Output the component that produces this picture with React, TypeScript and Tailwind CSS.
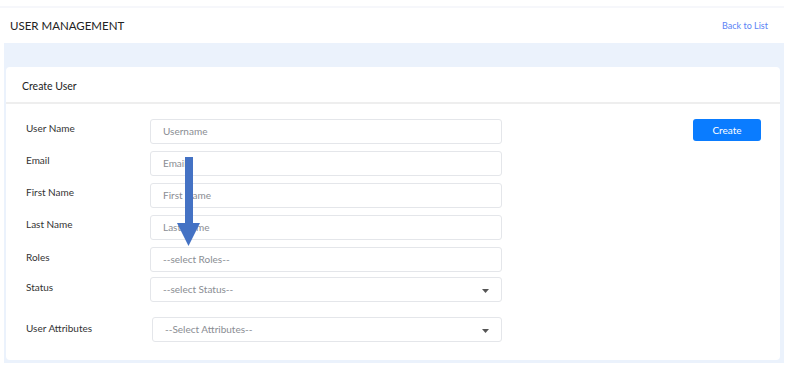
const fields = [
  { label: "User Name", placeholder: "Username" },
  { label: "Email", placeholder: "Email" },
  { label: "First Name", placeholder: "First Name" },
  { label: "Last Name", placeholder: "Last Name" },
];

function Caret() {
  return (
    <svg width="7" height="4" viewBox="0 0 7 4" className="absolute right-[12px] top-[11px]">
      <path d="M0 0h7L3.5 4z" fill="#555" />
    </svg>
  );
}

function TextBox({ placeholder, caret }: { placeholder: string; caret?: boolean }) {
  return (
    <div className="relative h-[25px] w-[352px] rounded-[3px] border border-[#e4e6ea] bg-white pl-[12px] flex items-center text-[10px] text-[#8a8d93]">
      {placeholder}
      {caret && <Caret />}
    </div>
  );
}

export default function App() {
  return (
    <div className="w-[803px] h-[383px] bg-white font-['Lato',sans-serif] text-[#333]">
      <div className="w-[784px]">
        <div className="h-[6px]" />
        <div className="h-[37px] border-t-2 border-[#f6f7fb] flex items-center justify-between pl-[10px] pr-[16px]">
          <span className="text-[11.5px] text-[#222]">USER MANAGEMENT</span>
          <span className="text-[9px] text-[#5b83f5]">Back to List</span>
        </div>
        <div className="ml-[4px] bg-[#ebf2fc] pt-[24px] pb-[3px] pl-[2px] pr-[4px]">
          <div className="h-[293px] rounded-[4px] bg-white">
            <div className="h-[37px] border-b-2 border-[#eeeeee] flex items-center pl-[16px] pt-[4px] text-[10.5px] text-[#222]">
              Create User
            </div>
            <div className="flex pt-[15px] pr-[19px]">
              <div className="flex-1">
                {fields.map((f) => (
                  <div key={f.label} className="flex h-[32px]">
                    <div className="w-[144px] pl-[20px] pt-[2px] text-[10px] text-[#333]">{f.label}</div>
                    <TextBox placeholder={f.placeholder} />
                  </div>
                ))}
                <div className="flex h-[30px]">
                  <div className="w-[144px] pl-[20px] pt-[3px] text-[10px] text-[#333]">Roles</div>
                  <TextBox placeholder="--select Roles--" />
                </div>
                <div className="flex h-[40px]">
                  <div className="w-[144px] pl-[20px] pt-[3px] text-[10px] text-[#333]">Status</div>
                  <TextBox placeholder="--select Status--" caret />
                </div>
                <div className="flex">
                  <div className="w-[146px] pl-[20px] pt-[4px] text-[10px] text-[#333]">User Attributes</div>
                  <div className="w-[350px]">
                    <div className="relative h-[25px] rounded-[3px] border border-[#e4e6ea] bg-white pl-[12px] flex items-center text-[10px] text-[#8a8d93]">
                      --Select Attributes--
                      <Caret />
                    </div>
                  </div>
                </div>
              </div>
              <div className="flex items-start">
                <button className="h-[22px] w-[68px] rounded-[3px] bg-[#0a7cff] text-[10px] text-white">
                  Create
                </button>
              </div>
            </div>
          </div>
        </div>
      </div>
      {/* annotation arrow */}
      <svg width="24" height="90" viewBox="0 0 24 90" className="absolute left-[177px] top-[157px]">
        <rect x="8" y="0" width="8" height="68" fill="#4472c4" />
        <path d="M0 66h23L11.5 89z" fill="#4472c4" />
      </svg>
    </div>
  );
}
